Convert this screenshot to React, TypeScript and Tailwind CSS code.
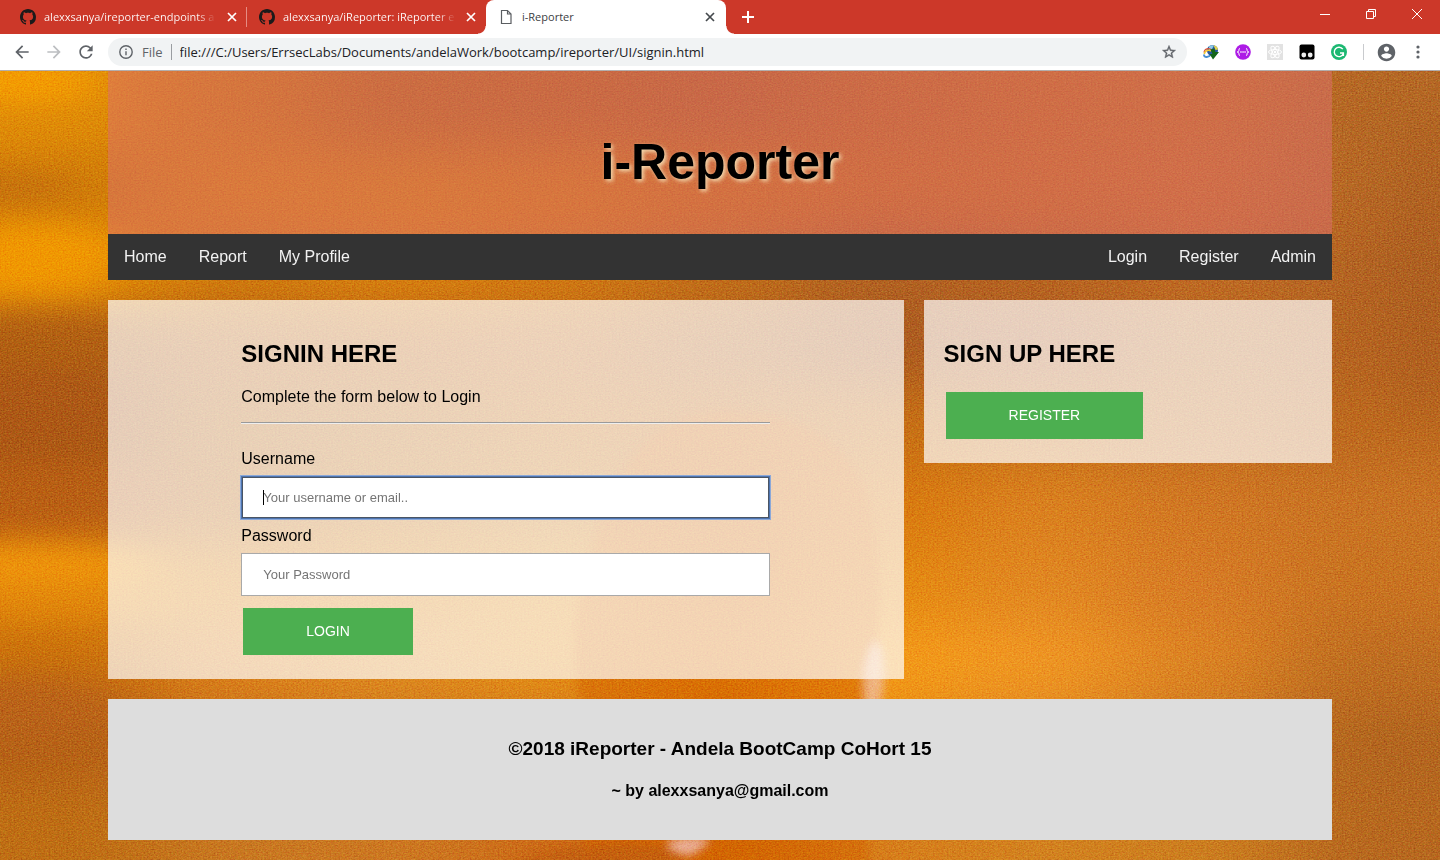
import type { ReactNode } from "react";

// Coarse colour field of the backdrop, one row per 79 units and one column per 160 units.
const colourField = [
  ["#e08a08", "#ce7a0a", "#ba6812", "#b86414", "#b4601c", "#bc661a", "#c26a1a", "#c26c1e", "#b46622"],
  ["#d07a08", "#da8408", "#d68308", "#d47c0a", "#cc7210", "#c66c16", "#c66c1a", "#c66c20", "#b66622"],
  ["#e48c04", "#d07a0c", "#d8800e", "#d07810", "#c06c16", "#b06020", "#b6621c", "#be6820", "#b26220"],
  ["#ac5a14", "#b66012", "#bc6210", "#c06614", "#b4621a", "#aa5a1c", "#ae5c24", "#b8681e", "#b4621e"],
  ["#a85612", "#b4620e", "#ba6810", "#c46c10", "#c46a10", "#c66e12", "#c46e16", "#c06c1c", "#bc681c"],
  ["#b85c12", "#b8640e", "#c26e0e", "#c87612", "#cc6e0c", "#d8780c", "#da801c", "#d07620", "#c87220"],
  ["#de8408", "#da800c", "#d8800c", "#e08a12", "#d87408", "#e4880e", "#e0861e", "#d67a22", "#c8721e"],
  ["#c86e0c", "#dc8018", "#e08a1c", "#e48c12", "#e07c08", "#f49a16", "#f09620", "#dc8220", "#be6c1e"],
  ["#b45e14", "#c6701a", "#c8741a", "#d0781a", "#d46c08", "#e4880e", "#dc841c", "#cc781c", "#b2641c"],
  ["#be6c12", "#c8761e", "#cc761e", "#cc6814", "#d06404", "#d67c18", "#d2801c", "#cc7c1c", "#b6661c"],
];

type Streak = [number, number, number, number, string, number];

// cx, cy, rx, ry, colour, opacity
const streaks: Streak[] = [
  [20, 10, 80, 26, "#f59c02", 0.9],
  [20, 50, 110, 20, "#e08a06", 0.6],
  [10, 116, 70, 14, "#c06c0e", 0.8],
  [30, 182, 100, 28, "#f29802", 0.9],
  [20, 212, 90, 12, "#f09602", 0.8],
  [40, 275, 110, 22, "#b05e10", 0.8],
  [20, 340, 110, 40, "#ac5614", 0.8],
  [40, 420, 120, 24, "#b85e12", 0.7],
  [30, 496, 130, 22, "#f0940a", 0.9],
  [60, 530, 120, 18, "#e4880c", 0.7],
  [20, 640, 100, 34, "#b86018", 0.8],
  [1425, 200, 30, 160, "#a85a1c", 0.6],
];

function Backdrop() {
  return (
    <svg
      className="absolute inset-0 h-full w-full"
      viewBox="0 0 1440 790"
      preserveAspectRatio="none"
      aria-hidden="true"
    >
      <defs>
        <filter id="field" filterUnits="userSpaceOnUse" x="-160" y="-160" width="1760" height="1110" colorInterpolationFilters="sRGB">
          <feGaussianBlur stdDeviation="50 26" />
        </filter>
        <filter id="streak" filterUnits="userSpaceOnUse" x="-200" y="-200" width="1840" height="1190" colorInterpolationFilters="sRGB">
          <feGaussianBlur stdDeviation="26 12" />
        </filter>
        <filter id="edge" filterUnits="userSpaceOnUse" x="400" y="200" width="700" height="700" colorInterpolationFilters="sRGB">
          <feGaussianBlur stdDeviation="4" />
        </filter>
        <filter id="grain" x="0" y="0" width="100%" height="100%" colorInterpolationFilters="sRGB">
          <feTurbulence type="fractalNoise" baseFrequency="0.57 0.73" numOctaves="2" seed="11" />
          <feColorMatrix values="1.5 0.3 0 0 -0.36  0.5 1.3 0 0 -0.36  0.5 0.5 0.8 0 -0.34  0 0 0 0 1" />
        </filter>
      </defs>
      <rect width="1440" height="790" fill="#c76f12" />
      <g filter="url(#field)">
        {colourField.map((row, r) => {
          const top = r === 0 ? -160 : r * 79;
          const bottom = r === colourField.length - 1 ? 950 : (r + 1) * 79;
          return row.map((fill, c) => {
            const left = c === 0 ? -160 : c * 160;
            const right = c === row.length - 1 ? 1600 : (c + 1) * 160;
            return <rect key={`${r}-${c}`} x={left} y={top} width={right - left} height={bottom - top} fill={fill} />;
          });
        })}
      </g>
      <g filter="url(#streak)">
        {streaks.map(([cx, cy, rx, ry, fill, opacity], i) => (
          <ellipse key={i} cx={cx} cy={cy} rx={rx} ry={ry} fill={fill} opacity={opacity} />
        ))}
      </g>
      <path
        d="M584 800V640C568 590 574 530 592 480C610 390 660 345 720 340C800 340 850 370 868 430C890 510 875 580 868 640V800Z"
        fill="#d46200"
        opacity="0.5"
        filter="url(#edge)"
      />
      <path
        d="M874 570C862 590 860 615 866 640C874 650 880 640 884 615C885 590 882 572 874 570Z"
        fill="#f0c0a0"
        opacity="0.75"
        filter="url(#edge)"
      />
      <path d="M500 800C540 778 620 768 680 778V800Z" fill="#bf5c10" opacity="0.7" filter="url(#edge)" />
      <path
        d="M668 772C676 766 704 766 710 770C704 778 692 786 686 786C678 782 664 780 668 772Z"
        fill="#ecb4a0"
        opacity="0.9"
        filter="url(#edge)"
      />
      <rect width="1440" height="790" filter="url(#grain)" opacity="0.45" style={{ mixBlendMode: "soft-light" }} />
    </svg>
  );
}

function GithubMark() {
  return (
    <svg viewBox="0 0 16 16" className="h-4 w-4 shrink-0 fill-[#1c1a1a]" aria-hidden="true">
      <path d="M8 0C3.58 0 0 3.58 0 8c0 3.54 2.29 6.53 5.47 7.59.4.07.55-.17.55-.38 0-.19-.01-.82-.01-1.49-2.01.37-2.53-.49-2.69-.94-.09-.23-.48-.94-.82-1.13-.28-.15-.68-.52-.01-.53.63-.01 1.08.58 1.23.82.72 1.21 1.87.87 2.33.66.07-.52.28-.87.51-1.07-1.78-.2-3.64-.89-3.64-3.95 0-.87.31-1.59.82-2.15-.08-.2-.36-1.02.08-2.12 0 0 .67-.21 2.2.82.64-.18 1.32-.27 2-.27s1.36.09 2 .27c1.53-1.04 2.2-.82 2.2-.82.44 1.1.16 1.92.08 2.12.51.56.82 1.27.82 2.15 0 3.07-1.87 3.75-3.65 3.95.29.25.54.73.54 1.48 0 1.07-.01 1.93-.01 2.2 0 .21.15.46.55.38A8.01 8.01 0 0 0 16 8c0-4.42-3.58-8-8-8Z" />
    </svg>
  );
}

function Cross({ className }: { className: string }) {
  return (
    <svg viewBox="0 0 10 10" className={className} fill="none" strokeWidth="1.7" aria-hidden="true">
      <path d="M1 1l8 8M9 1l-8 8" />
    </svg>
  );
}

function BackgroundTab({ title }: { title: string }) {
  return (
    <div className="flex h-full w-[238px] items-center gap-2 pr-[6px] pl-3">
      <GithubMark />
      <span className="min-w-0 flex-1">
        <span className="bg-linear-to-r from-white from-90% to-white/10 bg-clip-text whitespace-nowrap text-transparent">
          {title}
        </span>
      </span>
      <button aria-label="Close tab" className="flex h-4 w-4 items-center justify-center">
        <Cross className="h-[10px] w-[10px] stroke-white" />
      </button>
    </div>
  );
}

function TabStrip() {
  return (
    <div className="flex h-[34px] bg-[#cc3829] pl-2 text-[11px]">
      <BackgroundTab title="alexxsanya/ireporter-endpoints a" />
      <div className="flex items-center">
        <span className="h-5 w-px bg-[#e58c83]" />
      </div>
      <BackgroundTab title="alexxsanya/iReporter: iReporter e" />
      <div className="relative ml-px flex w-[240px] items-center gap-2 rounded-t-lg bg-white pr-2 pl-3 text-[#3c4043]">
        <span className="absolute bottom-0 -left-2 h-2 w-2 bg-[radial-gradient(circle_at_top_left,#cc3829_7px,#fff_8px)]" />
        <span className="absolute -right-2 bottom-0 h-2 w-2 bg-[radial-gradient(circle_at_top_right,#cc3829_7px,#fff_8px)]" />
        <svg viewBox="0 0 16 16" className="h-4 w-4" fill="none" stroke="#5a5d61" strokeWidth="1.2" aria-hidden="true">
          <path d="M3.500 1.500h6l3.500 3.500v9.500H3.500zM9.500 1.500v3.500h3.500" />
        </svg>
        <span className="flex-1">i-Reporter</span>
        <button aria-label="Close tab" className="flex h-4 w-4 items-center justify-center">
          <Cross className="h-[10px] w-[10px] stroke-[#45494d]" />
        </button>
      </div>
      <button aria-label="New tab" className="flex w-11 items-center justify-center">
        <svg viewBox="0 0 12 12" className="h-3 w-3" stroke="#fff" strokeWidth="2" aria-hidden="true">
          <path d="M6 0v12M0 6h12" />
        </svg>
      </button>
      <div className="ml-auto flex h-7">
        <button aria-label="Minimize" className="flex w-[46px] items-center justify-center">
          <svg viewBox="0 0 10 10" className="h-[10px] w-[10px]" stroke="#fff" aria-hidden="true">
            <path d="M0 5.500h10" />
          </svg>
        </button>
        <button aria-label="Restore" className="flex w-[46px] items-center justify-center">
          <svg viewBox="0 0 10 10" className="h-[10px] w-[10px]" fill="none" stroke="#fff" aria-hidden="true">
            <path d="M.5 2.500h7v7h-7zM2.500 2.500v-2h7v7h-2" />
          </svg>
        </button>
        <button aria-label="Close" className="flex w-[46px] items-center justify-center">
          <svg viewBox="0 0 10 10" className="h-[10px] w-[10px]" stroke="#fff" aria-hidden="true">
            <path d="M0 0l10 10M10 0L0 10" />
          </svg>
        </button>
      </div>
    </div>
  );
}

function ToolButton({ label, children }: { label: string; children: ReactNode }) {
  return (
    <button aria-label={label} className="flex h-8 w-8 items-center justify-center">
      {children}
    </button>
  );
}

function Toolbar() {
  return (
    <div className="flex h-[37px] items-center border-b border-[#b3aead] bg-white pr-[6px] pl-[6px]">
      <ToolButton label="Back">
        <svg viewBox="0 0 24 24" className="h-5 w-5 fill-[#5f6368]" aria-hidden="true">
          <path d="M20 11H7.830l5.590-5.590L12 4l-8 8 8 8 1.410-1.410L7.830 13H20v-2z" />
        </svg>
      </ToolButton>
      <ToolButton label="Forward">
        <svg viewBox="0 0 24 24" className="h-5 w-5 fill-[#bcbec1]" aria-hidden="true">
          <path d="M12 4l-1.410 1.410L16.170 11H4v2h12.170l-5.580 5.590L12 20l8-8z" />
        </svg>
      </ToolButton>
      <ToolButton label="Reload">
        <svg viewBox="0 0 24 24" className="h-5 w-5 fill-[#5f6368]" aria-hidden="true">
          <path d="M17.650 6.350A7.958 7.958 0 0 0 12 4c-4.420 0-7.990 3.580-7.990 8s3.570 8 7.990 8c3.730 0 6.840-2.550 7.730-6h-2.080A5.990 5.990 0 0 1 12 18c-3.310 0-6-2.690-6-6s2.690-6 6-6c1.660 0 3.140.690 4.220 1.780L13 11h7V4l-2.350 2.350z" />
        </svg>
      </ToolButton>
      <div className="ml-[6px] flex h-7 flex-1 items-center rounded-full bg-[#f1f3f4] pr-[10px] pl-[11px]">
        <svg viewBox="0 0 14 14" className="h-[14px] w-[14px]" fill="none" stroke="#5f6368" strokeWidth="1.4" aria-hidden="true">
          <circle cx="7" cy="7" r="6.2" />
          <path d="M7 6.300v4M7 3.500v1.500" />
        </svg>
        <span className="ml-[9px] text-[13px] leading-5 text-[#5f6368]">File</span>
        <span className="mx-2 h-4 w-px bg-[#9a9da1]" />
        <input
          aria-label="Address"
          className="min-w-0 flex-1 bg-transparent text-[13px] leading-5 text-[#202124] outline-none"
          defaultValue="file:///C:/Users/ErrsecLabs/Documents/andelaWork/bootcamp/ireporter/UI/signin.html"
        />
        <button aria-label="Bookmark this page">
          <svg viewBox="0 0 24 24" className="h-4 w-4 fill-[#5f6368] stroke-[#5f6368]" strokeWidth="0.6" aria-hidden="true">
            <path d="M22 9.240l-7.190-.620L12 2 9.190 8.630 2 9.240l5.460 4.730L5.820 21 12 17.270 18.180 21l-1.630-7.030L22 9.240zM12 15.400l-3.760 2.270 1-4.280-3.320-2.880 4.380-.380L12 6.100l1.710 4.040 4.380.380-3.320 2.880 1 4.280L12 15.400z" />
          </svg>
        </button>
      </div>
      <div className="ml-2 flex items-center">
        <ToolButton label="Download manager">
          <svg viewBox="0 0 16 16" className="h-4 w-4" aria-hidden="true">
            <circle cx="9.5" cy="6.500" r="5.500" fill="#2a57a0" />
            <path d="M6 2.500c2-1.500 4-1.300 5-1L9 5 6 6z" fill="#8ccbe8" />
            <path d="M10.500 1.200c2.500.3 4.300 2 4.500 4.300l-2.500.5z" fill="#e4d44c" />
            <path d="M1 8.500C1.500 4.500 6 3.500 9 6" fill="none" stroke="#d6503a" strokeWidth="1.2" />
            <path d="M1.200 10C2 6 6 5.500 8 7" fill="none" stroke="#f2c832" strokeWidth="1.6" />
            <path d="M1 10.500C1 14.500 6 13 8 10.500" fill="none" stroke="#4a8ed0" strokeWidth="2" />
            <path d="M7.500 5.500l4-1 .8 3.500H16l-6 7.500L6.500 10h3z" fill="#14661a" />
          </svg>
        </ToolButton>
        <ToolButton label="JSON viewer">
          <svg viewBox="0 0 16 16" className="h-4 w-4" aria-hidden="true">
            <circle cx="8" cy="8" r="7.800" fill="#ad1be6" />
            <path
              d="M5 4.500C3.200 4.500 4.400 7 3.400 7.500L2.200 8l1.200.5c1 .5-.2 3 1.600 3M11 4.500c1.800 0 .6 2.500 1.600 3l1.200.5-1.200.5c-1 .5.2 3-1.600 3"
              fill="none"
              stroke="#fff"
            />
            <path d="M5.300 8h1.300M7.400 8h1.300M9.400 8h1.300" stroke="#fff" strokeWidth="1.3" />
          </svg>
        </ToolButton>
        <ToolButton label="React developer tools">
          <svg viewBox="0 0 16 16" className="h-4 w-4" aria-hidden="true">
            <rect width="16" height="16" fill="#e2e2e2" />
            <g fill="none" stroke="#fff" strokeWidth="1">
              <ellipse cx="8" cy="8" rx="6.500" ry="2.500" />
              <ellipse cx="8" cy="8" rx="6.500" ry="2.500" transform="rotate(60 8 8)" />
              <ellipse cx="8" cy="8" rx="6.500" ry="2.500" transform="rotate(120 8 8)" />
            </g>
            <circle cx="8" cy="8" r="1.200" fill="#fff" />
          </svg>
        </ToolButton>
        <ToolButton label="Script manager">
          <svg viewBox="0 0 16 16" className="h-4 w-4" aria-hidden="true">
            <rect x=".5" y=".5" width="15" height="15" rx="2" fill="#000" />
            <circle cx="4.800" cy="11" r="2.400" fill="#eee" />
            <circle cx="11.200" cy="11" r="2.400" fill="#eee" />
          </svg>
        </ToolButton>
        <ToolButton label="Grammar checker">
          <svg viewBox="0 0 16 16" className="h-4 w-4" aria-hidden="true">
            <circle cx="8" cy="8" r="8" fill="#1cb872" />
            <path d="M11.800 5.200A4.700 4.700 0 1 0 12.400 9.500M9 9h3.400v3" fill="none" stroke="#fff" strokeWidth="1.4" />
          </svg>
        </ToolButton>
        <span className="mr-[6px] ml-2 h-4 w-px bg-[#c9cbce]" />
        <ToolButton label="Profile">
          <svg viewBox="0 0 24 24" className="h-[21px] w-[21px] fill-[#5f6368]" aria-hidden="true">
            <path d="M12 2C6.480 2 2 6.480 2 12s4.480 10 10 10 10-4.480 10-10S17.520 2 12 2zm0 3c1.660 0 3 1.340 3 3s-1.340 3-3 3-3-1.340-3-3 1.340-3 3-3zm0 14.200a7.200 7.200 0 0 1-6-3.220c.03-1.990 4-3.080 6-3.080 1.990 0 5.970 1.090 6 3.080a7.200 7.200 0 0 1-6 3.220z" />
          </svg>
        </ToolButton>
        <ToolButton label="Menu">
          <svg viewBox="0 0 4 14" className="h-[14px] w-1 fill-[#5f6368]" aria-hidden="true">
            <circle cx="2" cy="2" r="1.600" />
            <circle cx="2" cy="7" r="1.600" />
            <circle cx="2" cy="12" r="1.600" />
          </svg>
        </ToolButton>
      </div>
    </div>
  );
}

function NavLinks({ items }: { items: string[] }) {
  return (
    <div className="flex">
      {items.map((item) => (
        <a key={item} href="#" className="px-4 py-[14px] leading-[18px] text-[#f2f2f2]">
          {item}
        </a>
      ))}
    </div>
  );
}

const greenButton = "mx-[2px] mt-1 mb-[2px] bg-[#4caf50] px-[63px] py-4 text-sm leading-[15px] text-white uppercase";
const field =
  "block w-full border bg-white px-[21px] py-3 text-[13px] leading-[17px] text-black outline-none placeholder:text-[#757575]";

export default function App() {
  return (
    <div className="flex min-h-screen flex-col">
      <header className="font-['Open_Sans','Noto_Sans',sans-serif]">
        <TabStrip />
        <Toolbar />
      </header>
      <main className="relative flex-1 overflow-hidden pb-5 font-['Liberation_Sans',Arial,sans-serif] text-base text-black">
        <Backdrop />
        <div className="relative mx-auto w-[85%]">
          <div className="bg-[#dc7070]/50 px-5 pt-[62px] pb-[42px] text-center">
            <h1 className="text-[50px] leading-[59px] font-bold [text-shadow:2px_2px_4px_#f5deb3]">i-Reporter</h1>
          </div>
          <nav className="flex justify-between bg-[#333]">
            <NavLinks items={["Home", "Report", "My Profile"]} />
            <NavLinks items={["Login", "Register", "Admin"]} />
          </nav>
          <div className="mt-5 grid grid-cols-[65%_1fr] items-start gap-5">
            <section className="bg-white/70 pt-10 pb-[22px]">
              <form className="mx-auto w-[529px] max-w-full" onSubmit={(e) => e.preventDefault()}>
                <h2 className="text-2xl leading-7 font-bold">SIGNIN HERE</h2>
                <p className="mt-5 leading-[18px]">Complete the form below to Login</p>
                <hr className="mt-4 mb-[26px] border-t border-b border-t-[#9a9a9a] border-b-[#eee]" />
                <label htmlFor="username" className="block leading-[18px]">
                  Username
                </label>
                <div className="relative my-2">
                  <input
                    id="username"
                    autoFocus
                    placeholder="Your username or email.."
                    className={`${field} border-[#4d74b0] caret-transparent shadow-[0_0_0_1px_#8ba8d8,inset_0_0_0_1px_#4b5563]`}
                  />
                  <span className="pointer-events-none absolute top-[14px] left-[22px] h-[15px] w-px bg-black" />
                </div>
                <label htmlFor="password" className="block leading-[18px]">
                  Password
                </label>
                <div className="my-2">
                  <input id="password" type="password" placeholder="Your Password" className={`${field} border-[#a9a9a9]`} />
                </div>
                <button className={greenButton}>Login</button>
              </form>
            </section>
            <section className="bg-white/70 px-5 pt-10 pb-[22px]">
              <h2 className="mb-5 text-2xl leading-7 font-bold">SIGN UP HERE</h2>
              <button className={greenButton}>Register</button>
            </section>
          </div>
          <footer className="mt-5 bg-[#ddd] px-5 pt-[39px] pb-10 text-center font-bold">
            <h3 className="text-[19px] leading-[22px]">©2018 iReporter - Andela BootCamp CoHort 15</h3>
            <h4 className="mt-[22px] leading-[18px]">~ by alexxsanya@gmail.com</h4>
          </footer>
        </div>
      </main>
    </div>
  );
}
